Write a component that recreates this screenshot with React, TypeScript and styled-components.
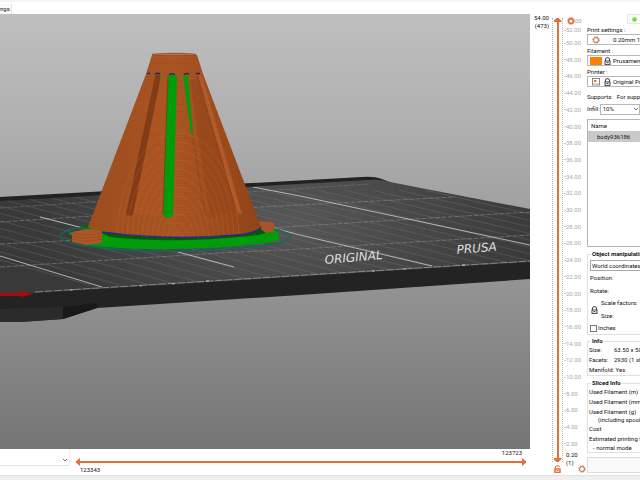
import React from "react";
import styled, { createGlobalStyle } from "styled-components";

const ORANGE = "#e2703a";

const GlobalStyle = createGlobalStyle`
  * { box-sizing: border-box; }
  body {
    margin: 0;
    background: #fff;
    color: #111;
    font: 6px/8px Roboto, "Open Sans", sans-serif;
  }
  button, input, select { font: inherit; color: inherit; margin: 0; }
`;

const Page = styled.div`
  display: grid;
  grid-template-rows: 14px minmax(0, 1fr) 5px;
  height: 100vh;
  min-height: 440px;
  overflow: hidden;
`;

const TabBar = styled.nav`
  display: flex;
  align-items: end;
  border-top: 2px solid #f3f3f3;
`;

const Tab = styled.button`
  height: 10px;
  padding: 0 1px 0 0;
  border: 0;
  border-right: 1px solid #e4e4e4;
  background: #fafafa;
`;

const Workspace = styled.main`
  display: grid;
  grid-template-columns: minmax(0, 1fr) 56px 54px;
  min-height: 0;
`;

const Preview = styled.section`
  display: grid;
  grid-template-rows: minmax(0, 1fr) 26px;
  min-height: 0;
`;

const Viewport = styled.svg`
  display: block;
  width: 100%;
  height: 100%;
  background: linear-gradient(#bfbfbf, #b0b0b0 25%, #959595 60%, #747474);
`;

const MoveBar = styled.div`
  display: grid;
  grid-template-columns: 70px minmax(0, 1fr);
  column-gap: 6px;
  padding-right: 4px;
`;

const ViewSelect = styled.button`
  height: 17px;
  display: flex;
  align-items: center;
  justify-content: flex-end;
  padding: 6px 1px 0 0;
  border: 0;
  border-right: 1px solid #f0f0f0;
  border-bottom: 1px solid #e4e4e4;
  background: #fff;
`;

const MoveSlider = styled.div`
  display: grid;
  grid-template-rows: 9px 8px 9px;
`;

const MoveLabel = styled.output<{ $end?: boolean }>`
  padding: 0 4px;
  text-align: ${(p) => (p.$end ? "right" : "left")};
`;

const RangePair = styled.div<{ $vertical?: boolean }>`
  display: grid;
  min-height: 0;
  grid-template: minmax(0, 1fr) / minmax(0, 1fr);
  background: linear-gradient(${ORANGE}, ${ORANGE}) center / ${(p) => (p.$vertical ? "2px 100%" : "100% 2px")} no-repeat;
`;

const Range = styled.input<{ $vertical?: boolean; $shape: string }>`
  grid-area: 1 / 1;
  appearance: none;
  width: 100%;
  height: 100%;
  min-width: 0;
  min-height: 0;
  background: none;
  pointer-events: none;
  writing-mode: ${(p) => (p.$vertical ? "vertical-lr" : "horizontal-tb")};
  direction: ${(p) => (p.$vertical ? "rtl" : "ltr")};
  &::-webkit-slider-thumb {
    appearance: none;
    pointer-events: auto;
    width: ${(p) => (p.$vertical ? 8 : 4)}px;
    height: ${(p) => (p.$vertical ? 4 : 8)}px;
    border: 0;
    border-radius: 0;
    background: ${ORANGE};
    clip-path: ${(p) => p.$shape};
  }
`;

const LayerPanel = styled.aside`
  display: grid;
  grid-template-columns: 21px 13px 22px;
  min-height: 0;
`;

const Readout = styled.output`
  padding-right: 2px;
  text-align: right;
`;

const ScaleColumn = styled.div`
  display: grid;
  grid-template-rows: 4px minmax(0, 1fr) 13px;
  min-height: 0;
`;

const Scale = styled.div`
  display: grid;
  grid-template-columns: 8px;
  justify-content: center;
  min-height: 0;
  margin: 0 1px;
  border: dotted #b8b8b8;
  border-width: 0 1px;
`;

const IconButton = styled.button`
  display: flex;
  align-items: center;
  justify-content: center;
  padding: 0;
  border: 0;
  background: none;
`;

const LabelColumn = styled.div`
  display: grid;
  grid-template-rows: 12px 13px minmax(0, 1fr) 27px;
  min-height: 0;
  color: #a8a8a8;
`;

const Labels = styled.ol`
  display: flex;
  flex-direction: column;
  justify-content: space-between;
  min-height: 0;
  margin: 0;
  padding: 0;
  list-style: none;
`;

const TickRow = styled.div`
  display: flex;
  align-items: center;
  height: 8px;
  &::before {
    content: "";
    width: 2px;
    height: 1px;
    background: #ccc;
  }
`;

const TopCorner = styled.div`
  display: flex;
  align-items: center;
  padding: 1px 0 0 3px;
`;

const BottomCorner = styled.div`
  display: flex;
  justify-content: space-between;
  padding: 3px 1px 2px 2px;
  color: #111;
`;

const GearButton = styled(IconButton)`
  align-self: flex-end;
`;

const Sidebar = styled.aside`
  display: flex;
  flex-direction: column;
  min-height: 0;
  padding: 0 0 2px 1px;
  overflow: hidden;
  white-space: nowrap;
`;

const ModeRow = styled.div`
  display: flex;
  justify-content: flex-end;
  height: 10px;
`;

const ModeButton = styled.button`
  width: 13px;
  height: 10px;
  padding: 1px 0 0 4px;
  display: flex;
  align-items: center;
  border: 1px solid #e6e6e6;
  border-right: 0;
  background: #fafafa;
`;

const PresetLabel = styled.span`
  height: 10px;
  line-height: 11px;
  flex: none;
`;

const Preset = styled.button`
  flex: none;
  display: flex;
  align-items: center;
  gap: 2px;
  width: 120px;
  height: 11px;
  padding: 0 2px;
  border: 1px solid #b8b8b8;
  background: #fff;
`;

const IconSlot = styled.span`
  display: flex;
  justify-content: center;
  width: 12px;
`;

const PresetText = styled.span<{ $indent?: boolean }>`
  margin-left: ${(p) => (p.$indent ? 9 : 0)}px;
`;

const Swatch = styled.span`
  width: 12px;
  height: 8px;
  background: #ff8000;
`;

const Line = styled.div<{ $h?: number; $gap?: number; $indent?: number }>`
  flex: none;
  display: flex;
  align-items: center;
  gap: 4px;
  height: ${(p) => p.$h ?? 10}px;
  margin-top: ${(p) => p.$gap ?? 0}px;
  padding-left: ${(p) => p.$indent ?? 0}px;
`;

const InfillSelect = styled.select`
  appearance: none;
  width: 32px;
  height: 9px;
  padding: 0 2px;
  border: 0;
  background: #fff;
`;

const InfillLabel = styled.label`
  width: 14px;
`;

const InfillBox = styled.span`
  display: flex;
  align-items: center;
  width: 60px;
  height: 11px;
  margin-left: -4px;
  border: 1px solid #b8b8b8;
`;

const ObjectTable = styled.table`
  width: 100%;
  border-collapse: collapse;
  th, td { padding: 0 0 0 3px; height: 11px; text-align: left; font-weight: 400; line-height: 8px; }
  td { padding-left: 9px; background: #c9c9c9; }
`;

const ObjectList = styled.div`
  flex: 1 1 0;
  min-height: 30px;
  width: 120px;
  margin-top: 4px;
  border: 1px solid #b5b5b5;
`;

const Group = styled.fieldset<{ $gap: number }>`
  flex: none;
  display: block;
  width: 120px;
  min-width: 0;
  margin: ${(p) => p.$gap}px 0 0;
  padding: 0 0 0 1px;
  border: 1px solid #e0e0e0;
`;

const Legend = styled.legend`
  height: 8px;
  margin-left: 2px;
  padding: 0 1px;
  font-weight: 700;
`;

const CoordSelect = styled.select`
  appearance: none;
  display: block;
  width: 110px;
  height: 11px;
  margin: 2px 0 1px 1px;
  padding: 0 1px;
  border: 1px solid #a8a8a8;
  border-radius: 0;
  background: #fff;
`;

const ScaleBlock = styled.div`
  display: grid;
  grid-template-columns: 8px 1fr;
  column-gap: 2px;
  align-items: center;
  padding-left: 2px;
`;

const Check = styled.input`
  appearance: none;
  width: 7px;
  height: 7px;
  border: 1px solid #777;
  background: #fff;
  &:checked { background: ${ORANGE}; }
`;

const CheckLabel = styled.label`
  display: flex;
  align-items: center;
  gap: 1px;
  height: 12px;
  padding-left: 1px;
`;

const Key = styled.span`
  width: 21px;
`;

const SliceButton = styled.button`
  flex: none;
  width: 120px;
  height: 16px;
  margin-top: 4px;
  border: 1px solid #dcdcdc;
  background: #f9f9f9;
`;

const StatusBar = styled.footer`
  background: #efefef;
  border-top: 1px solid #e2e2e2;
`;

const Gear = ({ color = "#c07850", width = 1.3 }: { color?: string; width?: number }) => (
  <svg width="8" height="8" viewBox="0 0 10 10" fill="none" stroke={color} aria-hidden="true">
    <circle cx="5" cy="5" r="4.2" strokeWidth="1.2" strokeDasharray="1.65 1.65" />
    <circle cx="5" cy="5" r="3" strokeWidth={width} />
  </svg>
);

const Lock = ({ color = "#444", open = false }: { color?: string; open?: boolean }) => (
  <svg width="7" height="8" viewBox="0 0 7 8" fill="none" stroke={color} aria-hidden="true">
    <path d={open ? "M1.5 4V2a1.5 1.5 0 0 1 1.5-1.3h1a1.5 1.5 0 0 1 1.5 1.3" : "M1.5 4V2a1.5 1.5 0 0 1 1.5-1.3h1A1.5 1.5 0 0 1 5.5 2V4"} />
    <rect x="1" y="4" width="5" height="3.4" strokeWidth={open ? 1.5 : 1} />
    <path d="M2.5 5.6h2" />
  </svg>
);

const PrinterIcon = () => (
  <svg width="8" height="8" viewBox="0 0 8 8" fill="none" aria-hidden="true">
    <rect x="0.5" y="0.5" width="7" height="6.5" stroke="#888" />
    <path d="M2 2h2.4v2H2z" fill={ORANGE} />
    <path d="M1 5.8h6" stroke="#ccc" />
  </svg>
);

const Chevron = () => (
  <svg width="6" height="4" viewBox="0 0 6 4" fill="none" stroke="#666" aria-hidden="true">
    <path d="M1 1l2 2 2-2" strokeWidth="0.9" />
  </svg>
);

const heights = Array.from({ length: 25 }, (_, i) => `${50 - i * 2}.00`);
const CONE = "M152 55Q174 51 197 55L203 74 261 227Q259 233 235 235Q175 241 119 234L91 229 88 227 146 74Z";
const SURFACE = "M0 201L368 180Q382 179 390 182L530 209V262L35 293H0Z";

const Bed = () => (
  <g>
    <path d="M0 197L362 177Q374 176 382 179L392 183 0 206Z" fill="#222" />
    <path d="M0 292L35 292 530 261V279L300 295 97 308 63 319 20 322H0Z" fill="#232323" />
    <path d="M0 309L63 307 63 319 20 322H0Z" fill="#2b2b2b" />
    <path d="M63 307L97 303V308L63 319Z" fill="#191919" />
    <path d={SURFACE} fill="url(#bed)" />
    <g clipPath="url(#bedClip)" fill="none">
      <g stroke="#777" strokeWidth="0.5" opacity="0.7">
        {Array.from({ length: 30 }, (_, i) => {
          const x = -250 + i * 27;
          return <path key={i} d={`M${x} 190L${x + 340 + i * 3} 285`} />;
        })}
      </g>
      <g stroke="#888" strokeWidth="0.6" strokeDasharray="5 1.5">
        <path d="M0 222L140 213L300 205L455 197" />
        <path d="M0 244L60 241L300 226L530 212" />
        <path d="M0 267L220 253L300 249L530 235" />
        <path d="M0 208L370 184" opacity="0.7" />
      </g>
      <path d="M35 292L530 261" stroke="#999" strokeWidth="0.8" strokeDasharray="8 1.5" />
      <g stroke="#cfcfcf" strokeWidth="0.8">
        <path d="M0 256L102 287" />
        <path d="M40 217L83 228M178 252L234 267" />
        <path d="M253 187L300 196L530 245" />
        <path d="M240 219L300 235L432 266" />
      </g>
      <path d="M70 290h3M139 286h3M172 284h3M206 281h3M372 271h3M403 269h3M462 265h3" stroke="#ccc" />
    </g>
    <g fill="#dedede" fontFamily="DejaVu Sans, sans-serif" fontSize="12" fontStyle="italic">
      <text transform="translate(325 264) rotate(-5)">ORIGINAL</text>
      <text transform="translate(457 254) rotate(-5)">PRUSA</text>
    </g>
    <path d="M0 293H20V291L34 294 20 297V296H0Z" fill="#a80b0b" />
  </g>
);

const Model = () => (
  <g>
    <path d="M81 226L92 224 92 232 79 232Z" fill="#006b08" />
    <path d="M68 233L90 229 268 226Q281 232 279 240Q255 247 175 249Q115 250 83 244Z" fill="#009c0b" />
    <path d="M60 237Q61 229 82 228H270Q291 232 290 238Q279 247 230 248Q150 255 86 246Q61 242 60 237Z" fill="none" stroke="#12695a" strokeWidth="1.3" />
    <path d="M100 232L262 226 269 229Q268 235 250 236Q175 244 110 237Z" fill="#005c09" />
    <path d="M256 221L274 222V231L266 233 258 227Z" fill="#a9532a" />
    <path d={CONE} fill="url(#cone)" />
    <path d="M101 232Q170 241 235 235Q258 233 261 227" fill="none" stroke="#2a2497" strokeWidth="1.5" />
    <g clipPath="url(#coneClip)">
      <path d="M155 76Q158 73 161 76L133 214Q129 218 126 214Z" fill="#813d19" />
      <path d="M161 76L166 76 163 214 133 214Z" fill="#b95b25" opacity="0.4" />
      <path d="M197 76L202 76 242 214 237 213Z" fill="#b65e2c" />
      <path d="M197 76L237 213" stroke="#8d431c" strokeWidth="1.2" />
      <path d="M190 80L210 217 234 212 200 80Z" fill="#94481c" opacity="0.6" />
      <path d="M192 133L205 214L210 217" fill="none" stroke="#843f19" strokeDasharray="1 1" />
      <g fill="none" stroke="#853f19" strokeWidth="0.5" opacity="0.5">
        {Array.from({ length: 76 }, (_, i) => {
          const y = 56 + i * 2.4;
          return <path key={i} d={`M85 ${y - 12}Q174 ${y + 18} 262 ${y - 12}`} />;
        })}
      </g>
      <g fill="none" stroke="#cf7640" strokeWidth="0.5" opacity="0.45">
        {Array.from({ length: 12 }, (_, i) => (
          <ellipse key={i} cx="178" cy="242" rx={6 + i * 5} ry={10 + i * 9} />
        ))}
      </g>
    </g>
    <ellipse cx="174" cy="54.5" rx="22" ry="1.2" fill="#bd7440" stroke="#84401a" strokeWidth="0.6" />
    <path d="M168 76Q172 73 177 76L173 214Q172 218 168 218T163 214Z" fill="#009d0b" />
    <path d="M168 76L163 214" stroke="#5e4b15" strokeWidth="0.8" />
    <path d="M183 75L188 76 193 134 191 134Z" fill="#009d0b" />
    <path d="M160 76h1v4h-1z" fill="#358f13" />
    <path d="M147 73.5h3M155 74.3q3-2 5 0M169 74.7q3-2 6 0M184 74.5q3-2 5 0M196 73.5h4" fill="none" stroke="#302171" strokeWidth="1.4" />
    <path d="M72 232L86 229 102 231V243L86 245 72 242Z" fill="#ad5728" />
    <path d="M72 233Q86 237 102 233M72 236Q86 240 102 236M72 239Q86 243 102 239" fill="none" stroke="#8b431e" strokeWidth="0.5" />
  </g>
);

export default function App() {
  return (
    <>
      <GlobalStyle />
      <Page>
        <TabBar>
          <Tab>ngs</Tab>
        </TabBar>
        <Workspace>
          <Preview>
            <Viewport viewBox="0 14 530 435" preserveAspectRatio="xMaxYMid slice" role="img" aria-label="Sliced model on the print bed">
              <defs>
                <radialGradient id="bed" gradientUnits="userSpaceOnUse" cx="290" cy="222" r="260" gradientTransform="translate(0 111) scale(1 0.5)">
                  <stop offset="0" stopColor="#585858" />
                  <stop offset="1" stopColor="#393939" />
                </radialGradient>
                <linearGradient id="cone">
                  <stop offset="0" stopColor="#9f4f20" />
                  <stop offset="0.5" stopColor="#ad5825" />
                  <stop offset="0.75" stopColor="#a14e1e" />
                  <stop offset="1" stopColor="#914518" />
                </linearGradient>
                <clipPath id="bedClip"><path d={SURFACE} /></clipPath>
                <clipPath id="coneClip"><path d={CONE} /></clipPath>
              </defs>
              <Bed />
              <Model />
            </Viewport>
            <MoveBar>
              <ViewSelect aria-label="View"><Chevron /></ViewSelect>
              <MoveSlider>
                <MoveLabel $end>123723</MoveLabel>
                <RangePair>
                  <Range type="range" aria-label="First move" min={0} max={100} defaultValue={0} $shape="polygon(100% 0, 100% 100%, 0 60%, 0 40%)" />
                  <Range type="range" aria-label="Last move" min={0} max={100} defaultValue={100} $shape="polygon(0 0, 100% 40%, 100% 60%, 0 100%)" />
                </RangePair>
                <MoveLabel>123343</MoveLabel>
              </MoveSlider>
            </MoveBar>
          </Preview>
          <LayerPanel>
            <Readout>54.00<br />(473)</Readout>
            <ScaleColumn>
              <span />
              <Scale>
                <RangePair $vertical>
                  <Range $vertical type="range" aria-label="Top layer" min={0} max={100} defaultValue={100} $shape="polygon(0 100%, 0 70%, 40% 0, 60% 0, 100% 70%, 100% 100%)" />
                  <Range $vertical type="range" aria-label="Bottom layer" min={0} max={100} defaultValue={0} $shape="polygon(0 0, 100% 0, 100% 30%, 60% 100%, 40% 100%, 0 30%)" />
                </RangePair>
              </Scale>
              <IconButton aria-label="Unlock layers"><Lock open color={ORANGE} /></IconButton>
            </ScaleColumn>
            <LabelColumn>
              <TopCorner><Gear color={ORANGE} width={2} /><span>00</span></TopCorner>
              <TickRow>52.00</TickRow>
              <Labels>{heights.map((h) => <TickRow as="li" key={h}>{h}</TickRow>)}</Labels>
              <BottomCorner>
                <output>0.20<br />(1)</output>
                <GearButton aria-label="Slider settings"><Gear /></GearButton>
              </BottomCorner>
            </LabelColumn>
          </LayerPanel>
          <Sidebar>
            <ModeRow>
              <ModeButton aria-label="Simple mode">
                <svg width="5" height="5" viewBox="0 0 5 5"><circle cx="2.5" cy="2.5" r="2.3" fill="#75dc3c" /></svg>
              </ModeButton>
            </ModeRow>
            <PresetLabel>Print settings :</PresetLabel>
            <Preset aria-label="Print settings"><IconSlot><Gear /></IconSlot><PresetText $indent>0.20mm 100mms</PresetText></Preset>
            <PresetLabel>Filament :</PresetLabel>
            <Preset aria-label="Filament"><Swatch /><Lock /><PresetText>Prusament PLA</PresetText></Preset>
            <PresetLabel>Printer :</PresetLabel>
            <Preset aria-label="Printer"><IconSlot><PrinterIcon /></IconSlot><Lock /><PresetText>Original Prusa i3</PresetText></Preset>
            <Line $h={12} $gap={4}><span>Supports:</span><span>For support enforcers only</span></Line>
            <Line $h={12}>
              <InfillLabel htmlFor="infill">Infill:</InfillLabel>
              <InfillBox><InfillSelect id="infill"><option>10%</option></InfillSelect><Chevron /></InfillBox>
            </Line>
            <ObjectList>
              <ObjectTable>
                <thead><tr><th>Name</th></tr></thead>
                <tbody><tr><td>body936186</td></tr></tbody>
              </ObjectTable>
            </ObjectList>
            <Group $gap={3}>
              <Legend>Object manipulation</Legend>
              <CoordSelect aria-label="Coordinates"><option>World coordinates</option></CoordSelect>
              <Line $h={12} $indent={1}>Position:</Line>
              <Line $h={12} $gap={1} $indent={1}>Rotate:</Line>
              <ScaleBlock>
                <Lock />
                <div>
                  <Line $h={12}>Scale factors:</Line>
                  <Line $h={12} $gap={1}>Size:</Line>
                </div>
              </ScaleBlock>
              <CheckLabel><Check type="checkbox" />Inches</CheckLabel>
            </Group>
            <Group $gap={2}>
              <Legend>Info</Legend>
              <Line><Key>Size:</Key>63.50 x 50.00</Line>
              <Line><Key>Facets:</Key>2930 (1 shell)</Line>
              <Line>Manifold: Yes</Line>
            </Group>
            <Group $gap={3}>
              <Legend>Sliced Info</Legend>
              <Line>Used Filament (m)</Line>
              <Line>Used Filament (mm³)</Line>
              <Line $h={8} $gap={1}>Used Filament (g)</Line>
              <Line $h={8} $indent={9}>(including spool)</Line>
              <Line>Cost</Line>
              <Line>Estimated printing time</Line>
              <Line $h={8} $indent={4}>- normal mode</Line>
            </Group>
            <SliceButton aria-label="Export" />
          </Sidebar>
        </Workspace>
        <StatusBar />
      </Page>
    </>
  );
}
